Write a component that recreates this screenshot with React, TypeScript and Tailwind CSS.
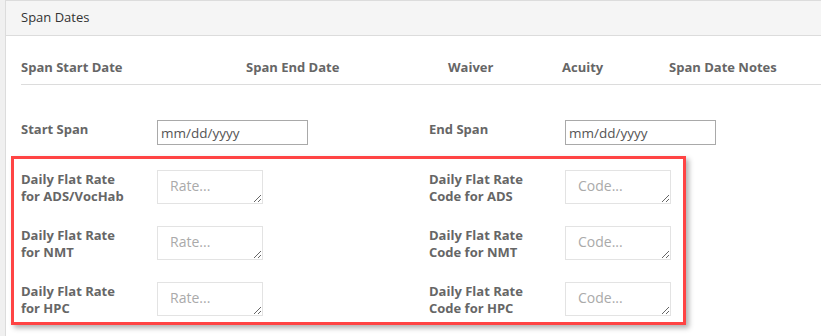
import React from "react";

const font = { fontFamily: '"Open Sans", "Liberation Sans", sans-serif' };

function Label({ children }: { children: React.ReactNode }) {
  return (
    <div className="w-[136px] shrink-0 pt-[1px] text-[13px] font-bold leading-[17px] text-[#666]">
      {children}
    </div>
  );
}

function DateField() {
  return (
    <input
      type="text"
      placeholder="mm/dd/yyyy"
      className="h-[25px] w-[151px] shrink-0 border border-[#a9a9a9] bg-white px-[3px] text-[13.5px] text-[#555] placeholder:text-[#555] outline-none"
    />
  );
}

function Area({ ph }: { ph: string }) {
  return (
    <textarea
      placeholder={ph}
      className="block h-[34px] w-[106px] shrink-0 border border-[#e3e3e3] bg-white px-[12px] pt-[5px] text-[14px] leading-[20px] text-[#555] placeholder:text-[#aaa] outline-none"
    />
  );
}

const rows = [
  { l: ["Daily Flat Rate", "for ADS/VocHab"], r: ["Daily Flat Rate", "Code for ADS"] },
  { l: ["Daily Flat Rate", "for NMT"], r: ["Daily Flat Rate", "Code for NMT"] },
  { l: ["Daily Flat Rate", "for HPC"], r: ["Daily Flat Rate", "Code for HPC"] },
];

export default function App() {
  return (
    <div className="h-[336px] w-[821px] overflow-hidden bg-[#f0f0f0] pl-[5px]" style={font}>
      <div className="h-full border-l border-t border-[#dcdcdc] bg-white">
        <div className="flex h-[35px] items-center border-b border-[#dcdcdc] bg-[#f5f5f5] px-[15px] text-[13px] text-[#333]">
          Span Dates
        </div>
        <div className="pl-[15px] pt-[15px]">
          <div className="flex h-[34px] items-center border-b border-[#dcdcdc] text-[13px] font-bold text-[#666]">
            <div className="w-[225px] shrink-0">Span Start Date</div>
            <div className="w-[202px] shrink-0">Span End Date</div>
            <div className="w-[114px] shrink-0">Waiver</div>
            <div className="w-[107px] shrink-0">Acuity</div>
            <div>Span Date Notes</div>
          </div>
          <div className="mt-[35px] flex">
            <div className="flex w-[408px] shrink-0 items-start">
              <Label>Start Span</Label>
              <DateField />
            </div>
            <div className="flex w-[380px] shrink-0 items-start">
              <Label>End Span</Label>
              <DateField />
            </div>
          </div>
          <div className="-ml-[10px] mt-[11px] flex w-[675px] flex-col gap-[21px] border-[3px] border-[#ff4444] pb-[5px] pl-[7px] pt-[11px] shadow-[3px_3px_5px_rgba(0,0,0,0.3)]">
            {rows.map((row, i) => (
              <div key={i} className="flex">
                <div className="flex w-[408px] shrink-0 items-start">
                  <Label>
                    {row.l[0]}
                    <br />
                    {row.l[1]}
                  </Label>
                  <Area ph="Rate..." />
                </div>
                <div className="flex w-[250px] shrink-0 items-start">
                  <Label>
                    {row.r[0]}
                    <br />
                    {row.r[1]}
                  </Label>
                  <Area ph="Code..." />
                </div>
              </div>
            ))}
          </div>
        </div>
      </div>
    </div>
  );
}
